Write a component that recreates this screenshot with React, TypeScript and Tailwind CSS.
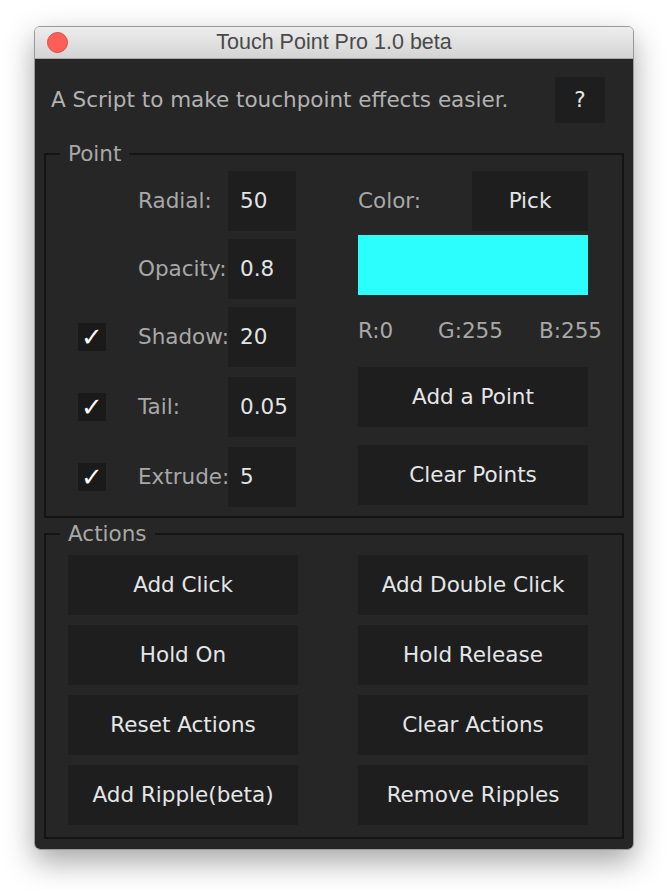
import React from "react";

const font = { fontFamily: '"DejaVu Sans", "Noto Sans", sans-serif' };

const Btn = ({ label, className = "" }: { label: string; className?: string }) => (
  <button
    className={`flex items-center justify-center bg-[#1e1e1e] text-[#e4e6e8] text-[21.5px] whitespace-nowrap ${className}`}
  >
    {label}
  </button>
);

const Check = () => (
  <div className="w-[28px] h-[28px] bg-[#1a1a1a] flex items-center justify-center text-white text-[26px] leading-none">
    ✓
  </div>
);

// one row on the left side of the Point box
const Row = ({ label, value, check, className = "" }: { label: string; value: string; check?: boolean; className?: string }) => (
  <div className={`flex items-center h-[60px] ${className}`}>
    <div className="w-[28px] shrink-0">{check && <Check />}</div>
    <span className="ml-[32px] w-[90px] shrink-0 whitespace-nowrap text-[#a8a8a8] text-[21.5px]">{label}</span>
    <div className="w-[68px] h-[60px] shrink-0 bg-[#1e1e1e] flex items-center pl-[12px] text-[#e2e4e6] text-[21.5px]">
      {value}
    </div>
  </div>
);

export default function App() {
  return (
    <div className="min-h-[890px] bg-white pt-[26px] pl-[34px]" style={font}>
      <div className="w-[600px] rounded-[6px] overflow-hidden shadow-[0_12px_30px_rgba(0,0,0,0.35)] border border-[#9a9a9a]">
        {/* title bar */}
        <div className="relative h-[32px] bg-gradient-to-b from-[#ededed] to-[#d4d4d4] border-b border-[#a8a8a8] flex items-center justify-center">
          <div className="absolute left-[12px] top-[5px] w-[21px] h-[21px] rounded-full bg-[#fc5f57] border border-[#e2463f]" />
          <span className="text-[21.5px] text-[#4a4a4a]" style={{ fontFamily: '"Liberation Sans", Arial, sans-serif' }}>
            Touch Point Pro 1.0 beta
          </span>
        </div>

        <div className="bg-[#262626] pb-[10px]">
          <div className="flex items-center justify-between pt-[18px] pl-[16px] pr-[28px]">
            <span className="text-[21.5px] text-[#b2b2b2]">A Script to make touchpoint effects easier.</span>
            <Btn label="?" className="w-[50px] h-[46px]" />
          </div>

          {/* Point */}
          <fieldset className="mx-[9px] mt-[19px] border-2 border-[#141414]">
            <legend className="ml-[14px] px-[8px] text-[21.5px] leading-[24px] text-[#a8a8a8]">Point</legend>
            <div className="flex pl-[32px] pb-[9px] pt-[5px]">
              <div className="flex flex-col">
                <Row label="Radial:" value="50" />
                <Row label="Opacity:" value="0.8" className="mt-[8px]" />
                <Row label="Shadow:" value="20" check className="mt-[8px]" />
                <Row label="Tail:" value="0.05" check className="mt-[10px]" />
                <Row label="Extrude:" value="5" check className="mt-[10px]" />
              </div>
              <div className="ml-[62px] w-[230px] flex flex-col">
                <div className="flex items-center justify-between h-[60px]">
                  <span className="text-[21.5px] text-[#a8a8a8]">Color:</span>
                  <Btn label="Pick" className="w-[116px] h-[60px]" />
                </div>
                <div className="mt-[4px] h-[60px] bg-[#2cfefe]" />
                <div className="h-[72px] flex items-center text-[21.5px] text-[#a8a8a8] whitespace-nowrap">
                  <span className="w-[80px] shrink-0">R:0</span>
                  <span className="w-[101px] shrink-0">G:255</span>
                  <span className="shrink-0">B:255</span>
                </div>
                <Btn label="Add a Point" className="h-[60px]" />
                <Btn label="Clear Points" className="h-[60px] mt-[18px]" />
              </div>
            </div>
          </fieldset>

          {/* Actions */}
          <fieldset className="mx-[9px] mt-[4px] border-2 border-[#141414]">
            <legend className="ml-[14px] px-[8px] text-[21.5px] leading-[24px] text-[#a8a8a8]">Actions</legend>
            <div className="grid grid-cols-[230px_230px] gap-x-[60px] gap-y-[10px] px-[22px] pt-[9px] pb-[12px]">
              <Btn label="Add Click" className="h-[60px]" />
              <Btn label="Add Double Click" className="h-[60px]" />
              <Btn label="Hold On" className="h-[60px]" />
              <Btn label="Hold Release" className="h-[60px]" />
              <Btn label="Reset Actions" className="h-[60px]" />
              <Btn label="Clear Actions" className="h-[60px]" />
              <Btn label="Add Ripple(beta)" className="h-[60px]" />
              <Btn label="Remove Ripples" className="h-[60px]" />
            </div>
          </fieldset>
        </div>
      </div>
    </div>
  );
}
